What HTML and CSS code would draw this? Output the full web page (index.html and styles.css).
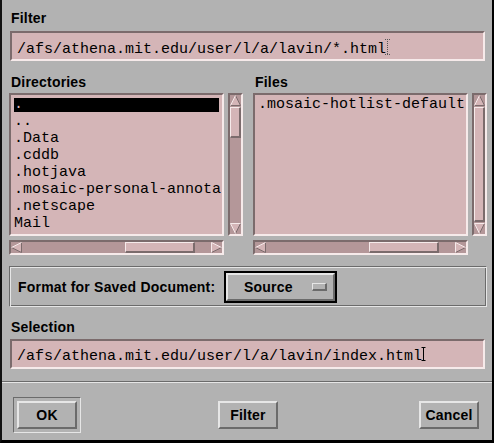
FILE: index.html
```html
<!DOCTYPE html>
<html>
<head>
<meta charset="utf-8">
<link rel="stylesheet" href="styles.css">
</head>
<body>
<div class="dialog">
  <div class="label">Filter</div>
  <div class="field"><span>/afs/athena.mit.edu/user/l/a/lavin/*.html</span><svg class="ibeam dotted" width="5" height="16" viewBox="0 0 5 16"><line x1="2.5" y1="0" x2="2.5" y2="16" stroke="#555" stroke-dasharray="1 1"/><line x1="0" y1="0.5" x2="5" y2="0.5" stroke="#555" stroke-dasharray="1 1"/><line x1="0" y1="15.5" x2="5" y2="15.5" stroke="#555" stroke-dasharray="1 1"/></svg></div>

  <div class="lists">
    <div class="col">
      <div class="label col-label">Directories</div>
      <div class="listrow">
        <div class="list">
          <div class="item sel">.</div>
          <div class="item">..</div>
          <div class="item">.Data</div>
          <div class="item">.cddb</div>
          <div class="item">.hotjava</div>
          <div class="item">.mosaic-personal-annota</div>
          <div class="item">.netscape</div>
          <div class="item">Mail</div>
        </div>
        <div class="vscroll">
          <svg class="arrow" width="11" height="11" viewBox="0 0 11 11"><polygon points="5.5,0.5 10.5,10.5 0.5,10.5" fill="#d4b5b7"/><polyline points="5.5,0.5 10.5,10.5 0.5,10.5" fill="none" stroke="#7b6b6c"/><polyline points="0.5,10.5 5.5,0.5" fill="none" stroke="#f6eaea"/></svg>
          <div class="vtrough"><div class="vslider dir-slider"></div></div>
          <svg class="arrow" width="11" height="11" viewBox="0 0 11 11"><polygon points="0.5,0.5 10.5,0.5 5.5,10.5" fill="#d4b5b7"/><polyline points="10.5,0.5 5.5,10.5" fill="none" stroke="#7b6b6c"/><polyline points="5.5,10.5 0.5,0.5 10.5,0.5" fill="none" stroke="#f6eaea"/></svg>
        </div>
      </div>
      <div class="hscroll">
        <svg class="arrow" width="11" height="11" viewBox="0 0 11 11"><polygon points="0.5,5.5 10.5,0.5 10.5,10.5" fill="#d4b5b7"/><polyline points="10.5,0.5 10.5,10.5 0.5,5.5" fill="none" stroke="#7b6b6c"/><polyline points="0.5,5.5 10.5,0.5" fill="none" stroke="#f6eaea"/></svg>
        <div class="htrough"><div class="hslider"></div></div>
        <svg class="arrow" width="11" height="11" viewBox="0 0 11 11"><polygon points="10.5,5.5 0.5,0.5 0.5,10.5" fill="#d4b5b7"/><polyline points="10.5,5.5 0.5,10.5" fill="none" stroke="#7b6b6c"/><polyline points="0.5,10.5 0.5,0.5 10.5,5.5" fill="none" stroke="#f6eaea"/></svg>
      </div>
    </div>
    <div class="col">
      <div class="label col-label">Files</div>
      <div class="listrow">
        <div class="list">
          <div class="item">.mosaic-hotlist-default</div>
        </div>
        <div class="vscroll">
          <svg class="arrow" width="11" height="11" viewBox="0 0 11 11"><polygon points="5.5,0.5 10.5,10.5 0.5,10.5" fill="#d4b5b7"/><polyline points="5.5,0.5 10.5,10.5 0.5,10.5" fill="none" stroke="#7b6b6c"/><polyline points="0.5,10.5 5.5,0.5" fill="none" stroke="#f6eaea"/></svg>
          <div class="vtrough"><div class="vslider file-slider"></div></div>
          <svg class="arrow" width="11" height="11" viewBox="0 0 11 11"><polygon points="0.5,0.5 10.5,0.5 5.5,10.5" fill="#d4b5b7"/><polyline points="10.5,0.5 5.5,10.5" fill="none" stroke="#7b6b6c"/><polyline points="5.5,10.5 0.5,0.5 10.5,0.5" fill="none" stroke="#f6eaea"/></svg>
        </div>
      </div>
      <div class="hscroll">
        <svg class="arrow" width="11" height="11" viewBox="0 0 11 11"><polygon points="0.5,5.5 10.5,0.5 10.5,10.5" fill="#d4b5b7"/><polyline points="10.5,0.5 10.5,10.5 0.5,5.5" fill="none" stroke="#7b6b6c"/><polyline points="0.5,5.5 10.5,0.5" fill="none" stroke="#f6eaea"/></svg>
        <div class="htrough"><div class="hslider"></div></div>
        <svg class="arrow" width="11" height="11" viewBox="0 0 11 11"><polygon points="10.5,5.5 0.5,0.5 0.5,10.5" fill="#d4b5b7"/><polyline points="10.5,5.5 0.5,10.5" fill="none" stroke="#7b6b6c"/><polyline points="0.5,10.5 0.5,0.5 10.5,5.5" fill="none" stroke="#f6eaea"/></svg>
      </div>
    </div>
  </div>

  <div class="frame">
    <div class="fmt-label">Format for Saved Document:</div>
    <div class="option">
      <div class="option-face"><span>Source</span><span class="indicator"></span></div>
    </div>
  </div>

  <div class="label sel-label">Selection</div>
  <div class="field sel-field"><span>/afs/athena.mit.edu/user/l/a/lavin/index.html</span><svg class="ibeam solid" width="5" height="14" viewBox="0 0 5 14"><line x1="2.5" y1="0" x2="2.5" y2="14" stroke="#000"/><line x1="0.5" y1="0.5" x2="4.5" y2="0.5" stroke="#000"/><line x1="0.5" y1="13.5" x2="4.5" y2="13.5" stroke="#000"/></svg></div>

  <div class="separator"></div>

  <div class="buttons">
    <div class="default-ring"><div class="btn">OK</div></div>
    <div class="btn btn-mid">Filter</div>
    <div class="btn">Cancel</div>
  </div>
</div>
</body>
</html>
```

FILE: styles.css
```css
* { box-sizing: border-box; }
html, body { margin: 0; padding: 0; background: #b2b2b2; }
body { width: 494px; height: 443px; overflow: hidden; }

.dialog {
  width: 494px;
  height: 443px;
  background: #b2b2b2;
  border-left: 2px solid #111;
  border-right: 2px solid #000;
  border-bottom: 3px solid #000;
  padding: 10px 7px 0 8px;
  display: flex;
  flex-direction: column;
  font-family: "Liberation Sans", Arial, sans-serif;
  font-weight: bold;
  font-size: 14px;
  letter-spacing: 0.2px;
  color: #000;
}

.label { height: 16px; line-height: 16px; padding-left: 1px; white-space: nowrap; }
.col-label { padding-left: 2px; }

.field {
  height: 30px;
  margin-top: 5px;
  background: #d4b5b7;
  border: 2px solid;
  border-color: #7b6b6c #f6eaea #f6eaea #7b6b6c;
  padding: 6px 0 0 5px;
  font-family: "Liberation Mono", "Courier New", monospace;
  font-size: 15px;
  font-weight: normal;
  letter-spacing: 0;
  line-height: 17px;
  white-space: nowrap;
}
.ibeam { display: inline-block; margin-left: -1px; }
.ibeam.dotted { vertical-align: -2px; }
.ibeam.solid { vertical-align: -1px; }

.lists {
  display: grid;
  grid-template-columns: 234px 234px;
  column-gap: 10px;
  margin: 13px 0 0 -1px;
}
.col { display: flex; flex-direction: column; }
.listrow { display: flex; gap: 4px; margin-top: 3px; height: 143px; }

.list {
  width: 215px;
  height: 143px;
  background: #d4b5b7;
  border: 2px solid;
  border-color: #7b6b6c #f6eaea #f6eaea #7b6b6c;
  padding: 3px 3px 0 3px;
  font-family: "Liberation Mono", "Courier New", monospace;
  font-size: 15px;
  font-weight: normal;
  letter-spacing: 0;
}
.item { height: 14px; line-height: 14px; margin-bottom: 3px; white-space: nowrap; }
.item.sel { background: #000; color: #d4b5b7; }

.vscroll {
  width: 15px;
  height: 143px;
  background: #b49799;
  border: 2px solid;
  border-color: #7b6b6c #f6eaea #f6eaea #7b6b6c;
  display: flex;
  flex-direction: column;
}
.arrow { display: block; flex: none; }
.vtrough { flex: 1; padding-top: 1px; }
.vslider {
  width: 11px;
  background: #d4b5b7;
  border: 1px solid;
  border-color: #f6eaea #7b6b6c #7b6b6c #f6eaea;
  border-right-width: 2px;
  border-bottom-width: 2px;
}
.dir-slider { height: 31px; }
.file-slider { height: 115px; }

.hscroll {
  width: 215px;
  height: 15px;
  margin-top: 4px;
  background: #b49799;
  border: 2px solid;
  border-color: #7b6b6c #f6eaea #f6eaea #7b6b6c;
  display: flex;
}
.htrough { flex: 1; padding-left: 103px; }
.hslider {
  width: 70px;
  height: 11px;
  background: #d4b5b7;
  border: 1px solid;
  border-color: #f6eaea #7b6b6c #7b6b6c #f6eaea;
  border-right-width: 2px;
  border-bottom-width: 2px;
}

.frame {
  margin: 11px -2px 0 -1px;
  height: 41px;
  border: 1px solid;
  border-color: #6b6b6b #e6e6e6 #e6e6e6 #6b6b6b;
  box-shadow: inset 1px 1px 0 #e6e6e6, inset -1px -1px 0 #6b6b6b;
  display: flex;
  align-items: center;
  padding-left: 8px;
}
.fmt-label { width: 206px; line-height: 16px; white-space: nowrap; }
.option { width: 113px; height: 32px; border: 2px solid #000; }
.option-face {
  height: 100%;
  border: 2px solid;
  border-color: #e6e6e6 #6b6b6b #6b6b6b #e6e6e6;
  display: flex;
  align-items: center;
  padding: 0 6px 0 16px;
}
.indicator {
  margin-left: auto;
  width: 15px;
  height: 8px;
  border-style: solid;
  border-width: 1px 2px 2px 1px;
  border-color: #e6e6e6 #6b6b6b #6b6b6b #e6e6e6;
}

.sel-label { margin-top: 12px; }
.sel-field { margin-top: 4px; }

.separator {
  margin: 12px -7px 0 -8px;
  height: 2px;
  border-top: 1px solid #6b6b6b;
  border-bottom: 1px solid #e6e6e6;
}

.buttons {
  margin-top: 14px;
  height: 36px;
  display: flex;
  justify-content: space-between;
  align-items: center;
  padding: 0 6px 0 3px;
}
.default-ring {
  padding: 3px;
  border: 1px solid;
  border-color: #6b6b6b #e6e6e6 #e6e6e6 #6b6b6b;
}
.btn {
  width: 60px;
  height: 28px;
  border: 2px solid;
  border-color: #e6e6e6 #6b6b6b #6b6b6b #e6e6e6;
  display: flex;
  align-items: center;
  justify-content: center;
}
.btn-mid { margin-right: 4px; }
```
